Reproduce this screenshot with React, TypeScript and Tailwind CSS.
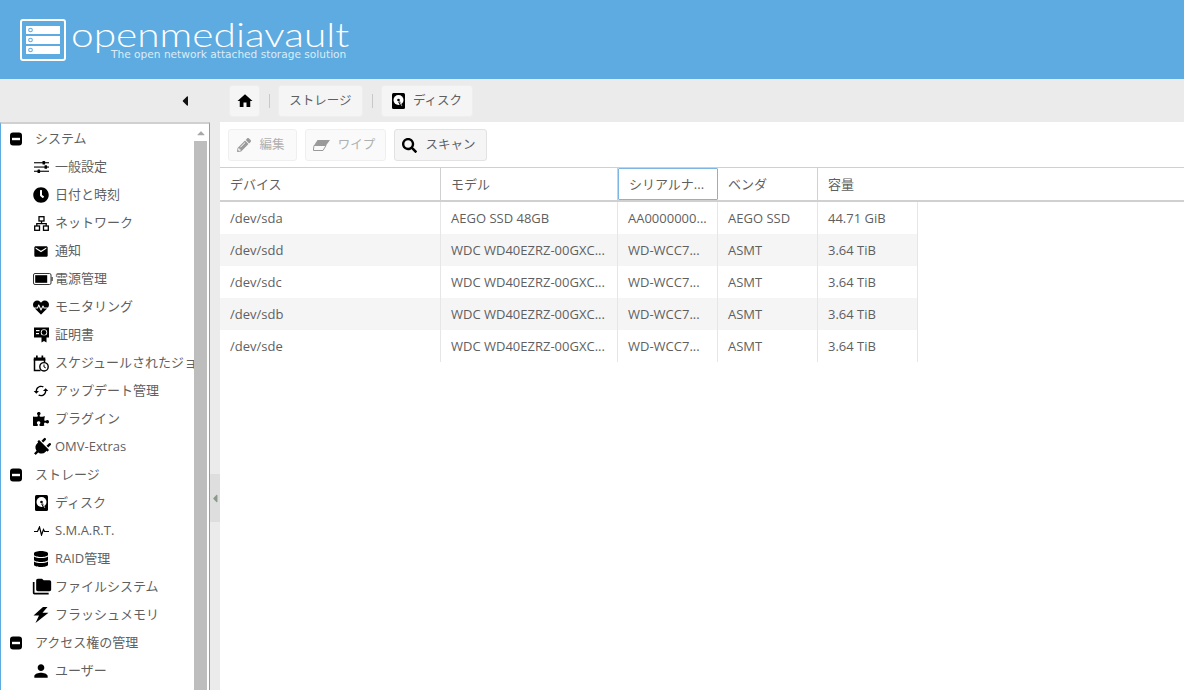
import React from "react";
import {
  FaClock, FaHeartbeat, FaPuzzlePiece, FaPlug, FaDatabase, FaPencilAlt, FaSearch, FaCaretLeft, FaCaretUp,
} from "react-icons/fa";
import { MdFolderCopy, MdCached, MdEmail, MdHome, MdPerson } from "react-icons/md";

const Disk = () => (
  <svg width="13" height="16" viewBox="0 0 13 16" className="shrink-0">
    <rect x="0" y="0" width="13" height="16" rx="1.500" fill="#000" />
    <circle cx="6.500" cy="7" r="5" fill="#fff" />
    <circle cx="6.500" cy="7" r="1.300" fill="#000" />
    <path d="M7 8.500L10 14" stroke="#000" strokeWidth="1.800" />
    <path d="M7.500 8.500L9.800 12.800" stroke="#fff" strokeWidth="0.800" />
  </svg>
);
const Cert = () => (
  <svg width="15" height="16" viewBox="0 0 15 16">
    <rect x="0" y="0.500" width="15" height="10" fill="#000" />
    <rect x="2" y="3" width="3.500" height="1.200" fill="#fff" />
    <rect x="2" y="6" width="3" height="1.200" fill="#fff" />
    <circle cx="10" cy="5.500" r="3.200" fill="#fff" />
    <circle cx="10" cy="5.500" r="2.400" fill="#000" />
    <path d="M7.500 8.500v7l2.500-1.500 2.500 1.500v-7z" fill="#000" />
  </svg>
);
const CalClock = () => (
  <svg width="16" height="17" viewBox="0 0 16 17" fill="none">
    <path d="M1.500 4v11.500h6" stroke="#000" strokeWidth="1.500" />
    <path d="M11.500 4v3" stroke="#000" strokeWidth="1.500" />
    <rect x="0.800" y="2.500" width="11.500" height="3.200" fill="#000" />
    <rect x="3" y="0.500" width="1.700" height="3" fill="#000" />
    <rect x="8.500" y="0.500" width="1.700" height="3" fill="#000" />
    <circle cx="11" cy="11.800" r="4.200" stroke="#000" strokeWidth="1.400" fill="#fff" />
    <path d="M11 9.500v2.500l1.800.9" stroke="#000" strokeWidth="1" />
  </svg>
);
const Pulse = () => (
  <svg width="15" height="10" viewBox="0 0 15 10" fill="none">
    <path d="M0 5.500h3.500L5.500 1l2 8 2-5.500 1 2H15" stroke="#000" strokeWidth="1.200" />
  </svg>
);
const Lan = () => (
  <svg width="15" height="15" viewBox="0 0 15 15" fill="none" stroke="#000" strokeWidth="1.300">
    <rect x="5" y="0.700" width="5" height="4.300" />
    <rect x="0.700" y="10" width="4.800" height="4.300" />
    <rect x="9.500" y="10" width="4.800" height="4.300" />
    <path d="M7.500 5v2.700M2.800 10V7.700h9.400V10" />
  </svg>
);
const Sliders = () => (
  <svg width="15" height="12" viewBox="0 0 15 12" fill="#000">
    <rect x="0" y="1.200" width="15" height="1.100" />
    <rect x="0" y="5.500" width="15" height="1.100" />
    <rect x="0" y="9.700" width="15" height="1.100" />
    <rect x="8.500" y="0" width="2.600" height="3.500" rx="0.600" />
    <rect x="10.500" y="4.300" width="2.600" height="3.500" rx="0.600" />
    <rect x="3.500" y="8.500" width="2.600" height="3.500" rx="0.600" />
  </svg>
);
const Battery = () => (
  <svg width="20" height="12" viewBox="0 0 20 12" fill="none" className="shrink-0 ml-1">
    <rect x="0.500" y="0.500" width="17.500" height="11" rx="1.500" stroke="#333" strokeWidth="1" />
    <rect x="2.200" y="2.200" width="12" height="7.600" fill="#000" />
    <rect x="18.500" y="4" width="1.200" height="4" fill="#333" />
  </svg>
);
const Bolt = () => (
  <svg width="16" height="16" viewBox="0 0 16 16" fill="#000">
    <path d="M10 0L0.500 8.500H6L2.500 16 15.500 5.800H9.500L14.500 0z" />
  </svg>
);
const Eraser = () => (
  <svg width="17" height="11" viewBox="0 0 17 11" fill="none" className="shrink-0">
    <path d="M4.500 0H17L13 5.500H1z" fill="#9a9a9a" />
    <path d="M1 5.500H13L10 10.500H0.500L0.500 9z" stroke="#9a9a9a" strokeWidth="1" />
  </svg>
);
const Minus = () => (
  <svg width="12" height="14" viewBox="0 0 12 14">
    <rect x="0" y="0.500" width="12" height="13" rx="3" fill="#000" />
    <rect x="2" y="5.800" width="8" height="2.400" fill="#fff" />
  </svg>
);

const I = ({ c, w = "w-4" }: { c: React.ReactNode; w?: string }) => (
  <span className={`${w} shrink-0 flex items-center justify-center text-black`}>{c}</span>
);

type Row = { t: string; g?: boolean; i?: React.ReactNode };
const rows: Row[] = [
  { t: "システム", g: true },
  { t: "一般設定", i: <Sliders /> },
  { t: "日付と時刻", i: <FaClock size={16} /> },
  { t: "ネットワーク", i: <Lan /> },
  { t: "通知", i: <MdEmail size={19} /> },
  { t: "電源管理", i: <Battery /> },
  { t: "モニタリング", i: <FaHeartbeat size={17} /> },
  { t: "証明書", i: <Cert /> },
  { t: "スケジュールされたジョブ", i: <CalClock /> },
  { t: "アップデート管理", i: <MdCached size={18} /> },
  { t: "プラグイン", i: <FaPuzzlePiece size={16} /> },
  { t: "OMV-Extras", i: <FaPlug size={19} className="rotate-45 shrink-0" /> },
  { t: "ストレージ", g: true },
  { t: "ディスク", i: <Disk /> },
  { t: "S.M.A.R.T.", i: <Pulse /> },
  { t: "RAID管理", i: <FaDatabase size={16} /> },
  { t: "ファイルシステム", i: <MdFolderCopy size={20} className="shrink-0 ml-[2px]" /> },
  { t: "フラッシュメモリ", i: <Bolt /> },
  { t: "アクセス権の管理", g: true },
  { t: "ユーザー", i: <MdPerson size={20} className="shrink-0" /> },
];

const data = [
  ["/dev/sda", "AEGO SSD 48GB", "AA0000000...", "AEGO SSD", "44.71 GiB"],
  ["/dev/sdd", "WDC WD40EZRZ-00GXC...", "WD-WCC7...", "ASMT", "3.64 TiB"],
  ["/dev/sdc", "WDC WD40EZRZ-00GXC...", "WD-WCC7...", "ASMT", "3.64 TiB"],
  ["/dev/sdb", "WDC WD40EZRZ-00GXC...", "WD-WCC7...", "ASMT", "3.64 TiB"],
  ["/dev/sde", "WDC WD40EZRZ-00GXC...", "WD-WCC7...", "ASMT", "3.64 TiB"],
];
const cols = ["w-[221px]", "w-[177px]", "w-[100px]", "w-[100px]", "w-[100px]"];
const heads = ["デバイス", "モデル", "シリアルナ...", "ベンダ", "容量"];
const font = "font-['Open_Sans','Noto_Sans_CJK_JP',sans-serif]";

const Crumb = ({ children, w }: { children: React.ReactNode; w: string }) => (
  <div className={`${w} h-8 flex items-center justify-center gap-2 rounded-[3px] bg-[#f5f5f5] border border-[#eeeeee] pt-px text-[12.500px] text-[#5f5f5f]`}>
    {children}
  </div>
);
const Sep = () => <div className="w-px h-[14px] bg-[#c8c8c8] mx-[8.5px]" />;
const Btn = ({ children, w, off }: { children: React.ReactNode; w: string; off?: boolean }) => (
  <div className={`${w} h-8 flex items-center justify-center gap-2 rounded-[3px] border pr-[3px] text-[12.500px] ${off ? "bg-[#fafafa] border-[#efefef] text-[#b0b0b0]" : "bg-[#f5f5f5] border-[#e2e2e2] text-[#5f5f5f]"}`}>
    {children}
  </div>
);

export default function App() {
  return (
    <div className={`w-[1184px] h-[690px] overflow-hidden flex flex-col bg-[#ebebeb] ${font}`}>
      <header className="h-[79px] shrink-0 bg-[#5dabe0] flex items-start pl-5 pt-[19px] text-white">
        <svg width="47" height="43" viewBox="0 0 47 43" className="shrink-0">
          <rect x="1" y="1" width="44" height="40" rx="2" fill="none" stroke="#fff" strokeWidth="2" />
          {[7, 17, 27].map((y) => (
            <g key={y}>
              <rect x="6" y={y} width="34" height="8" fill="#fff" />
              <circle cx="10.500" cy={y + 4} r="1.800" fill="none" stroke="#5dabe0" strokeWidth="1.100" />
            </g>
          ))}
        </svg>
        <div className="relative ml-[5px] h-full">
          <div className="font-['Lato',sans-serif] font-light text-[34px] leading-[34px] -ml-px -mt-[2px] scale-x-[1.195] origin-left whitespace-nowrap">openmediavault</div>
          <div className="absolute left-[39px] top-[28px] text-[10.600px] leading-[14px] whitespace-nowrap text-[#dcebf7] font-['DejaVu_Sans',sans-serif]">The open network attached storage solution</div>
        </div>
      </header>
      <div className="flex-1 flex min-h-0">
        <aside className="w-[210px] shrink-0 flex flex-col">
          <div className="h-[43px] shrink-0 flex items-center justify-end pr-[17px] text-[#111]"><FaCaretLeft size={16} /></div>
          <div className="flex-1 min-h-0 bg-white border-x border-x-[#5dabe0] border-t-2 border-t-[#d0d0d0] flex overflow-hidden">
            <div className="w-[193px] shrink-0 overflow-hidden pt-px">
              {rows.map((r) => (
                <div key={r.t} className={`h-7 flex items-center whitespace-nowrap text-[13px] text-[#5f5f5f] ${r.g ? "pl-[9px]" : "pl-[32px]"}`}>
                  {r.g ? <I w="w-[12px]" c={<Minus />} /> : <I c={r.i} />}
                  <span className={r.g ? "ml-[13px]" : "ml-[6px]"}>{r.t}</span>
                </div>
              ))}
            </div>
            <div className="w-[13px] shrink-0 flex flex-col">
              <div className="h-[17px] flex items-center justify-center text-[#a8a8a8]"><FaCaretUp size={12} /></div>
              <div className="flex-1 bg-[#bdbdbd]" />
            </div>
          </div>
        </aside>
        <div className="w-[10px] shrink-0 flex flex-col pt-[395px]">
          <div className="h-[48px] bg-[#dedede] flex items-center justify-center text-[#8a9a8a]"><FaCaretLeft size={13} /></div>
        </div>
        <main className="flex-1 min-w-0 flex flex-col">
          <div className="h-[43px] shrink-0 flex items-center pl-[9px]">
            <Crumb w="w-[31px]"><MdHome size={18} className="text-black" /></Crumb>
            <Sep />
            <Crumb w="w-[85px]">ストレージ</Crumb>
            <Sep />
            <Crumb w="w-[92px]"><Disk /><span>ディスク</span></Crumb>
          </div>
          <div className="flex-1 bg-white min-h-0 flex flex-col">
            <div className="h-[45px] shrink-0 flex items-center gap-2 pl-2 pt-[1px]">
              <Btn w="w-[69px]" off><FaPencilAlt size={14} className="text-[#9a9a9a]" />編集</Btn>
              <Btn w="w-[81px]" off><Eraser />ワイプ</Btn>
              <Btn w="w-[93px]"><FaSearch size={15} className="text-black" />スキャン</Btn>
            </div>
            <div className="h-[35px] shrink-0 flex border-t border-b-2 border-[#d0d0d0] text-[13px] text-[#5f5f5f]">
              {heads.map((h, i) => (
                <div key={h} className={`${cols[i]} shrink-0 flex items-center pl-[10px] pt-px whitespace-nowrap ${i === 2 ? "border border-[#7db5e3] rounded-[1px]" : i === 4 ? "" : "border-r border-[#d0d0d0]"}`}>{h}</div>
              ))}
            </div>
            {data.map((d, ri) => (
              <div key={d[0]} className={`h-8 w-[698px] flex text-[13px] text-[#5f5f5f] ${ri % 2 ? "bg-[#f5f5f5]" : "bg-white"}`}>
                {d.map((c, i) => (
                  <div key={i} className={`${cols[i]} shrink-0 flex items-center pl-[10px] pt-[1px] whitespace-nowrap border-r border-[#e6e6e6]`}>{c}</div>
                ))}
              </div>
            ))}
          </div>
        </main>
      </div>
    </div>
  );
}
